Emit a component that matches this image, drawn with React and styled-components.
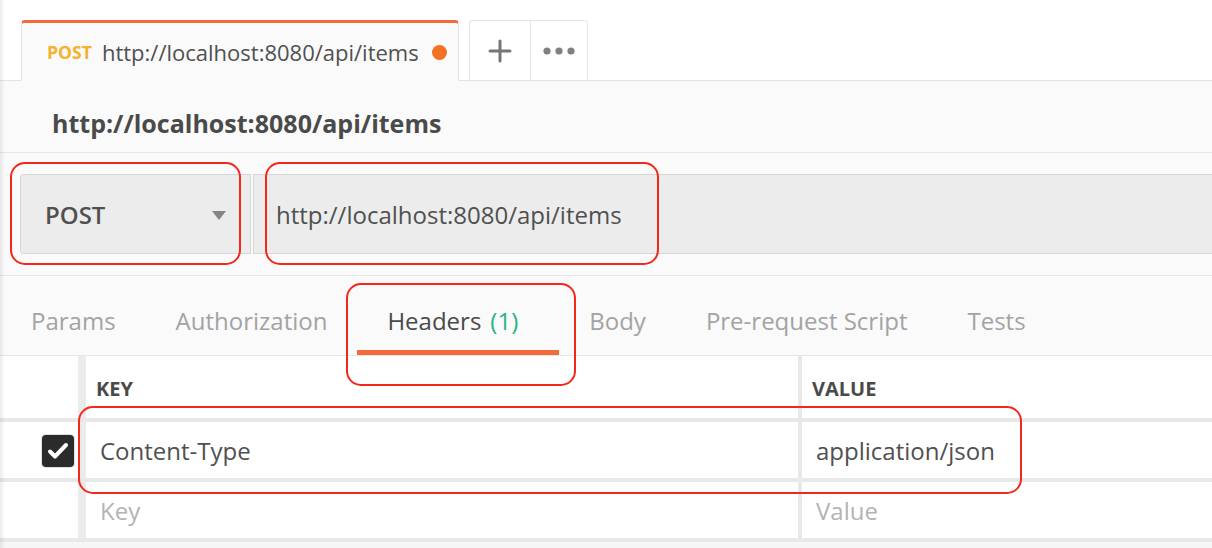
import React from "react";
import styled, { createGlobalStyle } from "styled-components";

const Global = createGlobalStyle`
  html, body { margin: 0; padding: 0; background: #fafafa; }
  body { font-family: "Open Sans", "Noto Sans", sans-serif; color: #505050; overflow: hidden; }
  * { box-sizing: border-box; }
`;

const Page = styled.div`
  position: relative;
  width: 1212px;
  height: 548px;
  overflow: hidden;
  background: #f6f6f6;
  &::after {
    content: "";
    position: absolute;
    left: 0; top: 0; bottom: 0;
    width: 5px;
    background: linear-gradient(to right, rgba(0,0,0,0.08), rgba(0,0,0,0));
    pointer-events: none;
  }
`;

const TabStrip = styled.div`
  display: flex;
  align-items: flex-end;
  height: 81px;
  padding-left: 21px;
  background: #fff;
  border-bottom: 1px solid #e3e3e3;
`;

const RequestTab = styled.div`
  display: flex;
  align-items: center;
  width: 438px;
  height: 61px;
  margin-bottom: -1px;
  padding: 0 11px 0 25px;
  background: #fafafa;
  border-top: 3px solid #f26b3a;
  border-left: 1px solid #e6e6e6;
  border-right: 1px solid #e6e6e6;
  border-radius: 4px 4px 0 0;
`;

const MethodTag = styled.span`
  font-size: 17.6px;
  font-weight: 700;
  color: #f6b12d;
  margin-right: 10px;
`;

const TabTitle = styled.span`
  flex: 1;
  font-size: 22px;
  color: #505050;
  white-space: nowrap;
`;

const Dot = styled.span`
  width: 15px;
  height: 15px;
  border-radius: 50%;
  background: #f47023;
`;

const ActionGroup = styled.div`
  display: flex;
  margin-left: 10px;
  height: 60px;
  background: #fff;
  border: 1px solid #e3e3e3;
  border-bottom: none;
  border-radius: 4px 4px 0 0;
`;

const ActionButton = styled.div`
  display: flex;
  align-items: center;
  justify-content: center;
  width: ${p => p.$w}px;
  & + & { border-left: 1px solid #e3e3e3; }
`;

const TitleBar = styled.div`
  display: flex;
  align-items: center;
  height: 72px;
  padding: 13px 0 0 52px;
  background: #fafafa;
  border-bottom: 1px solid #e6e6e6;
  font-size: 25px;
  font-weight: 700;
  color: #4a4a4a;
`;

const RequestSection = styled.div`
  display: flex;
  gap: 2px;
  padding: 21px 0 21px 20px;
  background: #fafafa;
  border-bottom: 1px solid #e6e6e6;
`;

const MethodSelect = styled.div`
  display: flex;
  align-items: center;
  justify-content: space-between;
  width: 231px;
  height: 80px;
  padding: 0 24px 0 24px;
  background: #ececec;
  border: 1px solid #d6d6d6;
  border-radius: 3px 0 0 3px;
  font-size: 24px;
  font-weight: 600;
  color: #505050;
`;

const Caret = styled.span`
  width: 0;
  height: 0;
  border-left: 7px solid transparent;
  border-right: 7px solid transparent;
  border-top: 9px solid #858585;
  margin-top: 2px;
`;

const UrlInput = styled.div`
  flex: 1;
  display: flex;
  align-items: center;
  height: 80px;
  padding-left: 22px;
  background: #ececec;
  border: 1px solid #d6d6d6;
  border-right: none;
  font-size: 24px;
  color: #505050;
`;

const TabsRow = styled.div`
  display: flex;
  height: 80px;
  padding-left: 1px;
  background: #fafafa;
  border-bottom: 1px solid #e6e6e6;
`;

const SubTab = styled.div`
  display: flex;
  align-items: center;
  height: 100%;
  padding: 15px ${p => (p.$active ? 41 : 30)}px 0 30px;
  border-bottom: 5px solid ${p => (p.$active ? "#f26b3a" : "transparent")};
  font-size: 24px;
  color: ${p => (p.$active ? "#4a4a4a" : "#a3a3a3")};
  white-space: nowrap;
`;

const Count = styled.span`
  color: #26b47f;
  margin-left: 9px;
`;

const Table = styled.div`
  background: #fff;
`;

const Row = styled.div`
  display: grid;
  grid-template-columns: 86px 716px 1fr;
  height: ${p => p.$h}px;
  border-bottom: 4px solid #e8e8e8;
`;

const CheckCell = styled.div`
  display: flex;
  align-items: center;
  justify-content: flex-end;
  padding: 2px 4px 0 0;
  border-right: 8px solid #ebebeb;
`;

const Cell = styled.div`
  display: flex;
  align-items: center;
  padding: ${p => (p.$head ? "2px 0 0 10px" : "0 0 0 14px")};
  border-right: ${p => (p.$divider ? "4px solid #e8e8e8" : "none")};
  font-size: ${p => (p.$head ? "20px" : "24px")};
  font-weight: ${p => (p.$head ? 700 : 400)};
  color: ${p => (p.$placeholder ? "#b3b3b3" : p.$head ? "#4a4a4a" : "#505050")};
  white-space: nowrap;
`;

const Check = styled.span`
  display: flex;
  align-items: center;
  justify-content: center;
  width: 32px;
  height: 32px;
  border-radius: 4px;
  background: #2b2b2b;
  box-shadow: 0 0 0 1px #e0e0e0;
`;

const Highlight = styled.div`
  position: absolute;
  left: ${p => p.$x}px;
  top: ${p => p.$y}px;
  width: ${p => p.$w}px;
  height: ${p => p.$h}px;
  border: 2px solid #f5261b;
  border-radius: 15px;
  pointer-events: none;
`;

const tabs = ["Params", "Authorization", "Headers", "Body", "Pre-request Script", "Tests"];

export default function App() {
  return (
    <>
      <Global />
      <Page>
        <TabStrip>
          <RequestTab>
            <MethodTag>POST</MethodTag>
            <TabTitle>http://localhost:8080/api/items</TabTitle>
            <Dot />
          </RequestTab>
          <ActionGroup>
            <ActionButton $w={60}>
              <svg width="24" height="24" viewBox="0 0 24 24">
                <path d="M12 2v20M2 12h20" stroke="#767676" strokeWidth="3" strokeLinecap="round" />
              </svg>
            </ActionButton>
            <ActionButton $w={57}>
              <svg width="32" height="10" viewBox="0 0 32 10">
                <circle cx="4" cy="5" r="3.6" fill="#808080" />
                <circle cx="16" cy="5" r="3.6" fill="#808080" />
                <circle cx="28" cy="5" r="3.6" fill="#808080" />
              </svg>
            </ActionButton>
          </ActionGroup>
        </TabStrip>

        <TitleBar>http://localhost:8080/api/items</TitleBar>

        <RequestSection>
          <MethodSelect>
            POST
            <Caret />
          </MethodSelect>
          <UrlInput>http://localhost:8080/api/items</UrlInput>
        </RequestSection>

        <TabsRow>
          {tabs.map(t => (
            <SubTab key={t} $active={t === "Headers"}>
              {t}
              {t === "Headers" && <Count>(1)</Count>}
            </SubTab>
          ))}
        </TabsRow>

        <Table>
          <Row $h={66}>
            <CheckCell />
            <Cell $head $divider>KEY</Cell>
            <Cell $head>VALUE</Cell>
          </Row>
          <Row $h={60}>
            <CheckCell>
              <Check>
                <svg width="26" height="26" viewBox="0 0 26 26">
                  <path d="M5 13.5l5 5L21 7" fill="none" stroke="#fff" strokeWidth="4" strokeLinecap="round" strokeLinejoin="round" />
                </svg>
              </Check>
            </CheckCell>
            <Cell $divider>Content-Type</Cell>
            <Cell>application/json</Cell>
          </Row>
          <Row $h={60}>
            <CheckCell />
            <Cell $divider $placeholder>Key</Cell>
            <Cell $placeholder>Value</Cell>
          </Row>
        </Table>

        <Highlight $x={10} $y={162} $w={231} $h={103} />
        <Highlight $x={265} $y={162} $w={394} $h={103} />
        <Highlight $x={346} $y={283} $w={230} $h={103} />
        <Highlight $x={78} $y={406} $w={944} $h={88} />
      </Page>
    </>
  );
}
